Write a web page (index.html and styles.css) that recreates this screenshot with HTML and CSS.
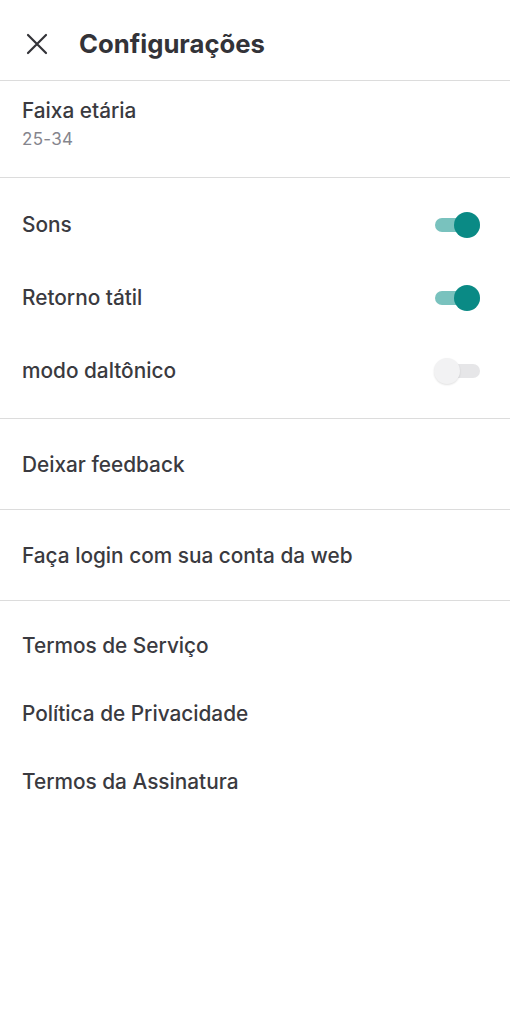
FILE: index.html
```html
<!DOCTYPE html>
<html lang="pt">
<head>
<meta charset="utf-8">
<title>Configurações</title>
<link rel="stylesheet" href="styles.css">
</head>
<body>
<div class="screen">
  <header class="topbar">
    <button class="close" aria-label="Fechar">
      <svg width="22" height="22" viewBox="0 0 22 22"><path d="M2 2 L20 20 M20 2 L2 20" stroke="#333338" stroke-width="2.2" stroke-linecap="round" fill="none"/></svg>
    </button>
    <h1 class="title">Configurações</h1>
  </header>

  <section class="section age">
    <div class="age-label">Faixa etária</div>
    <div class="age-value">25-34</div>
  </section>

  <section class="section toggles">
    <div class="row toggle-row"><span class="label">Sons</span><span class="switch on"><span class="thumb"></span></span></div>
    <div class="row toggle-row"><span class="label">Retorno tátil</span><span class="switch on"><span class="thumb"></span></span></div>
    <div class="row toggle-row"><span class="label">modo daltônico</span><span class="switch"><span class="thumb"></span></span></div>
  </section>

  <section class="section single"><span class="label">Deixar feedback</span></section>
  <section class="section single"><span class="label">Faça login com sua conta da web</span></section>

  <section class="section links">
    <div class="row link-row"><span class="label">Termos de Serviço</span></div>
    <div class="row link-row"><span class="label">Política de Privacidade</span></div>
    <div class="row link-row"><span class="label">Termos da Assinatura</span></div>
  </section>
</div>
</body>
</html>
```
FILE: styles.css
```css
* { box-sizing: border-box; }
html, body { margin: 0; padding: 0; background: #ffffff; }
body { font-family: Inter, "Noto Sans", "Liberation Sans", sans-serif; color: #3a3a40; }
.screen { width: 510px; }

.topbar {
  height: 81px;
  display: flex;
  align-items: center;
  padding: 7px 0 0 26px;
  border-bottom: 1px solid #dcdcdc;
}
.close {
  border: 0; background: none; padding: 0; margin: 0;
  width: 22px; height: 22px; display: flex;
}
.title {
  margin: 0 0 0 31px;
  font-size: 25.7px;
  font-weight: 700;
  color: #333338;
}

.section { border-bottom: 1px solid #dcdcdc; }
.label { font-size: 20.8px; font-weight: 500; color: #3a3a40; }

.age { height: 97px; padding: 17px 22px 0; }
.age-label { font-size: 20.8px; font-weight: 500; line-height: 26px; }
.age-value { font-size: 17px; font-weight: 400; color: #85858d; line-height: 24px; margin-top: 3px; letter-spacing: 0.3px; }

.toggles { padding: 10px 0 11px; }
.row { display: flex; align-items: center; padding: 0 22px; }
.toggle-row { height: 73px; justify-content: space-between; padding-right: 30px; }

.switch {
  position: relative;
  width: 45px; height: 14px;
  border-radius: 7px;
  background: #e6e6e8;
}
.switch .thumb {
  position: absolute;
  top: -6px; left: -1px;
  width: 26px; height: 26px;
  border-radius: 50%;
  background: #f2f2f3;
  box-shadow: 0 1px 2px rgba(0,0,0,0.12);
}
.switch.on { background: #79c2be; }
.switch.on .thumb { left: auto; right: 0; background: #0a8a85; box-shadow: none; }

.single { height: 91px; display: flex; align-items: center; padding: 0 22px; }

.links { border-bottom: 0; padding-top: 10px; }
.link-row { height: 68px; }
```
